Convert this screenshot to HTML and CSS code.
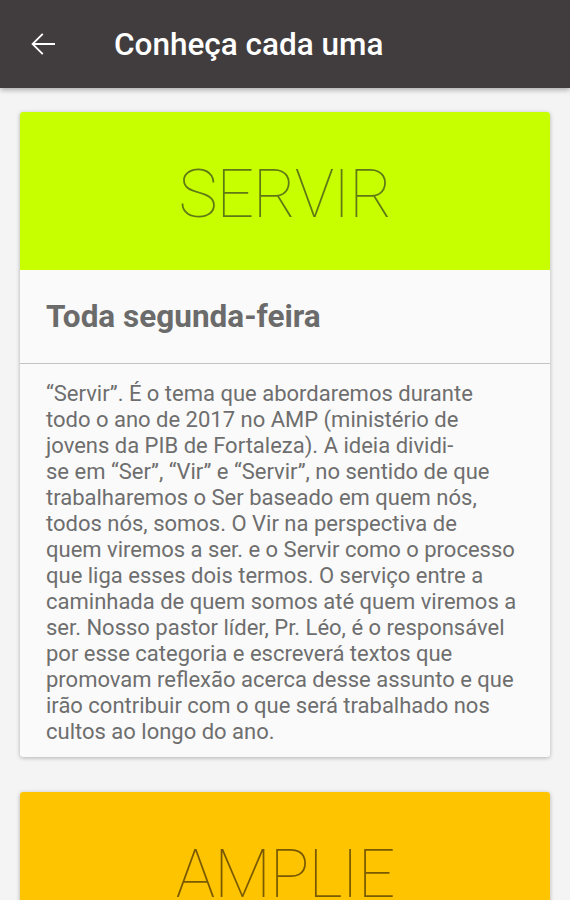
FILE: index.html
```html
<!DOCTYPE html>
<html lang="pt-BR">
<head>
<meta charset="utf-8">
<title>Conheça cada uma</title>
<link rel="stylesheet" href="styles.css">
</head>
<body>
<header class="appbar">
  <button class="back" aria-label="Voltar">
    <svg viewBox="0 0 24 24" width="36" height="36"><path fill="#fff" d="M20 11.4H6.6l5.7-5.7-.9-.9L4.2 12l7.2 7.2.9-.9-5.7-5.7H20z"/></svg>
  </button>
  <h1 class="title">Conheça cada uma</h1>
</header>
<main class="list">
  <article class="card">
    <div class="banner banner-servir"><span class="banner-text">SERVIR</span></div>
    <div class="card-head"><h2 class="card-title">Toda segunda-feira</h2></div>
    <p class="card-body">“Servir”. É o tema que abordaremos durante todo o ano de 2017 no AMP (ministério de jovens da PIB de Fortaleza). A ideia dividi-<br>se em “Ser”, “Vir” e “Servir”, no sentido de que trabalharemos o Ser baseado em quem nós, todos nós, somos. O Vir na perspectiva de<br>quem viremos a ser. e o Servir como o processo que liga esses dois termos. O serviço entre a caminhada de quem somos até quem viremos a ser. Nosso pastor líder, Pr. Léo, é o responsável por esse categoria e escreverá textos que promovam reflexão acerca desse assunto e que irão contribuir com o que será trabalhado nos cultos ao longo do ano.</p>
  </article>
  <article class="card">
    <div class="banner banner-amplie"><span class="banner-text amplie-text">AMPLIE</span></div>
  </article>
</main>
</body>
</html>
```

FILE: styles.css
```css
* { box-sizing: border-box; }
html, body { margin: 0; padding: 0; }
body {
  background: #f4f4f4;
  font-family: Roboto, "Noto Sans", sans-serif;
  width: 570px;
  height: 900px;
  overflow: hidden;
}
.appbar {
  height: 88px;
  background: #413d3e;
  display: flex;
  align-items: center;
  box-shadow: 0 2px 5px rgba(0,0,0,0.3);
  position: relative;
  z-index: 2;
}
.back {
  border: 0;
  background: none;
  padding: 0;
  margin: 0 0 0 25px;
  width: 36px;
  height: 36px;
  display: flex;
}
.title {
  margin: 0 0 0 53px;
  color: #fff;
  font-size: 31.5px;
  font-weight: 500;
  letter-spacing: 0;
}
.list {
  padding: 24px 20px 0;
  display: flex;
  flex-direction: column;
  gap: 35px;
}
.card {
  background: #fafafa;
  border-radius: 3px;
  box-shadow: 0 1px 4px rgba(0,0,0,0.28);
  overflow: hidden;
}
.banner {
  height: 158px;
  display: flex;
  align-items: center;
  justify-content: center;
}
.banner-servir { background: #c8ff00; }
.banner-amplie { background: #ffc400; }
.banner-text {
  font-size: 66px;
  font-weight: 100;
  color: #5f7a14;
  line-height: 1;
  margin-top: 7px;
  letter-spacing: -1px;
}
.amplie-text {
  color: #7a5a00;
}
.card-head {
  height: 94px;
  display: flex;
  align-items: center;
  padding: 0 26px;
  border-bottom: 1px solid #c4c4c4;
}
.card-title {
  margin: 0;
  font-size: 31.5px;
  font-weight: 700;
  color: #6b6b6b;
}
.card-body {
  margin: 0;
  padding: 17px 32px 12px 26px;
  font-size: 22px;
  line-height: 26px;
  color: #6e6e6e;
}
```
